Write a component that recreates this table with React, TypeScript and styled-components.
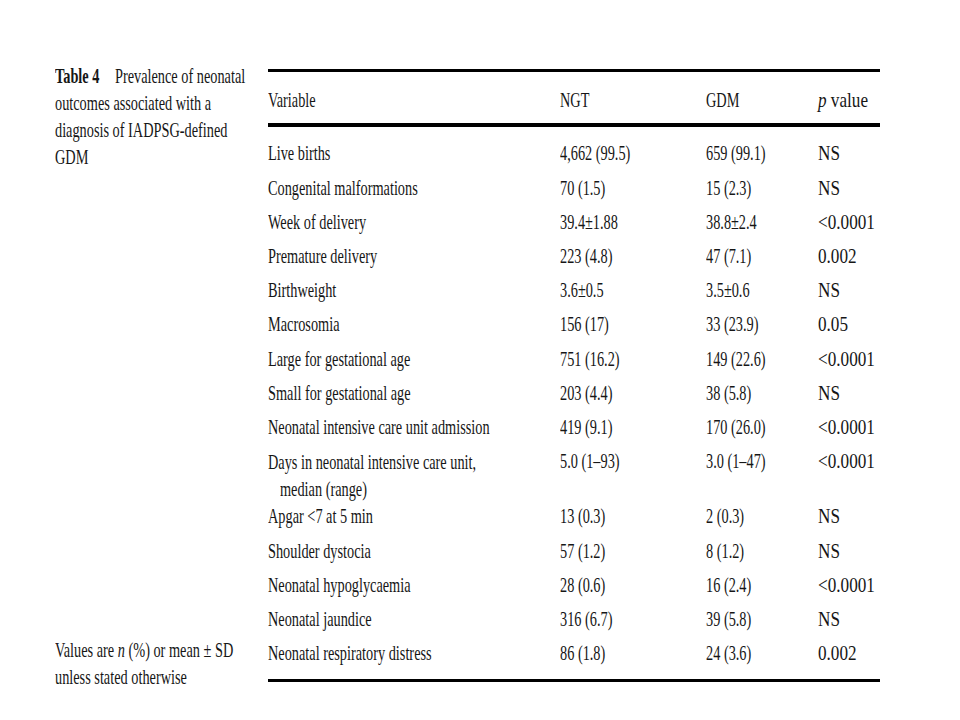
import React from 'react'
import styled, { createGlobalStyle } from 'styled-components'

type Outcome = {
  label: string
  second?: string
  ngt: string
  gdm: string
  p: string
}

const outcomes: Outcome[] = [
  { label: 'Live births', ngt: '4,662 (99.5)', gdm: '659 (99.1)', p: 'NS' },
  { label: 'Congenital malformations', ngt: '70 (1.5)', gdm: '15 (2.3)', p: 'NS' },
  { label: 'Week of delivery', ngt: '39.4±1.88', gdm: '38.8±2.4', p: '<0.0001' },
  { label: 'Premature delivery', ngt: '223 (4.8)', gdm: '47 (7.1)', p: '0.002' },
  { label: 'Birthweight', ngt: '3.6±0.5', gdm: '3.5±0.6', p: 'NS' },
  { label: 'Macrosomia', ngt: '156 (17)', gdm: '33 (23.9)', p: '0.05' },
  { label: 'Large for gestational age', ngt: '751 (16.2)', gdm: '149 (22.6)', p: '<0.0001' },
  { label: 'Small for gestational age', ngt: '203 (4.4)', gdm: '38 (5.8)', p: 'NS' },
  { label: 'Neonatal intensive care unit admission', ngt: '419 (9.1)', gdm: '170 (26.0)', p: '<0.0001' },
  {
    label: 'Days in neonatal intensive care unit,',
    second: 'median (range)',
    ngt: '5.0 (1–93)',
    gdm: '3.0 (1–47)',
    p: '<0.0001',
  },
  { label: 'Apgar <7 at 5 min', ngt: '13 (0.3)', gdm: '2 (0.3)', p: 'NS' },
  { label: 'Shoulder dystocia', ngt: '57 (1.2)', gdm: '8 (1.2)', p: 'NS' },
  { label: 'Neonatal hypoglycaemia', ngt: '28 (0.6)', gdm: '16 (2.4)', p: '<0.0001' },
  { label: 'Neonatal jaundice', ngt: '316 (6.7)', gdm: '39 (5.8)', p: 'NS' },
  { label: 'Neonatal respiratory distress', ngt: '86 (1.8)', gdm: '24 (3.6)', p: '0.002' },
]

export default function App() {
  return (
    <>
      <GlobalStyles />
      <Page>
        <Side>
          <Caption>
            <Line>
              <Squeeze>
                <b>Table 4</b>
                <Gap />
                Prevalence of neonatal
              </Squeeze>
            </Line>
            <Line>
              <Squeeze>outcomes associated with a</Squeeze>
            </Line>
            <Line>
              <Squeeze>diagnosis of IADPSG-defined</Squeeze>
            </Line>
            <Line>
              <Squeeze>GDM</Squeeze>
            </Line>
          </Caption>
          <Footnote>
            <Line>
              <Squeeze>
                Values are <i>n</i> (%) or mean ± SD
              </Squeeze>
            </Line>
            <Line>
              <Squeeze>unless stated otherwise</Squeeze>
            </Line>
          </Footnote>
        </Side>
        <Table>
          <Rule $weight={3} />
          <HeadRow>
            <Cell>
              <Squeeze>Variable</Squeeze>
            </Cell>
            <Cell>
              <Squeeze>NGT</Squeeze>
            </Cell>
            <Cell>
              <Squeeze>GDM</Squeeze>
            </Cell>
            <Cell>
              <Squeeze $wide>
                <i>p</i> value
              </Squeeze>
            </Cell>
          </HeadRow>
          <Rule $weight={4} />
          <Body>
            {outcomes.map((o) => (
              <Row key={o.label} $tall={!!o.second}>
                <Cell>
                  {o.second ? (
                    <TwoLines>
                      <Squeeze>{o.label}</Squeeze>
                      <Indented>
                        <Squeeze>{o.second}</Squeeze>
                      </Indented>
                    </TwoLines>
                  ) : (
                    <Squeeze>{o.label}</Squeeze>
                  )}
                </Cell>
                <Cell>
                  <Squeeze>{o.ngt}</Squeeze>
                </Cell>
                <Cell>
                  <Squeeze>{o.gdm}</Squeeze>
                </Cell>
                <Cell>
                  <Squeeze $wide>{o.p}</Squeeze>
                </Cell>
              </Row>
            ))}
          </Body>
          <Rule $weight={3.5} />
        </Table>
      </Page>
    </>
  )
}

const GlobalStyles = createGlobalStyle`
  * {
    margin: 0;
    padding: 0;
    box-sizing: border-box;
  }
  body {
    background: #ffffff;
    color: #161616;
    font-family: 'Liberation Serif', 'Times New Roman', serif;
    font-size: 22px;
  }
`
const Page = styled.div`
  width: 960px;
  height: 720px;
  display: flex;
  padding: 62px 0 0 55px;
`
const Side = styled.div`
  width: 213px;
  display: flex;
  flex-direction: column;
  justify-content: space-between;
  padding-bottom: 30px;
`
const Caption = styled.div``
const Footnote = styled.div``
const Line = styled.div`
  height: 27px;
  line-height: 27px;
`
// the source is a stretched scan: tall glyphs, narrow advance
const Squeeze = styled.span<{ $wide?: boolean }>`
  display: inline-block;
  white-space: nowrap;
  transform: scaleX(${(p) => (p.$wide ? 0.78 : 0.65)});
  transform-origin: 0 50%;
`
const Gap = styled.span`
  display: inline-block;
  width: 24px;
`
const Table = styled.div`
  width: 612px;
  margin-top: 7px;
`
const Rule = styled.div<{ $weight: number }>`
  height: ${(p) => p.$weight}px;
  background: #000000;
`
const Grid = styled.div`
  display: grid;
  grid-template-columns: 292px 146px 112px 62px;
`
const HeadRow = styled(Grid)`
  height: 51px;
  padding-top: 5px;
  line-height: 46px;
`
const Body = styled.div`
  padding: 9.4px 0 8.4px;
`
const Row = styled(Grid)<{ $tall?: boolean }>`
  height: ${(p) => (p.$tall ? 55 : 34.23)}px;
  line-height: 34.23px;
`
const Cell = styled.div`
  white-space: nowrap;
`
const TwoLines = styled.div`
  padding-top: 3.6px;
  line-height: 27px;
  display: flex;
  flex-direction: column;
`
const Indented = styled.div`
  padding-left: 12px;
`
